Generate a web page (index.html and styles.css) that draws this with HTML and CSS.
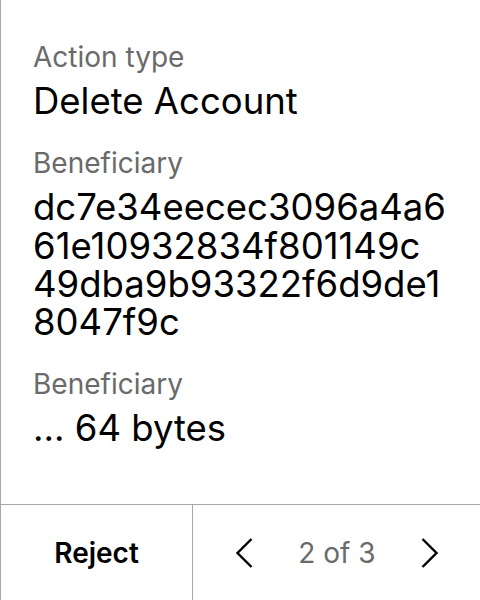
FILE: index.html
```html
<!DOCTYPE html>
<html>
<head>
<meta charset="utf-8">
<link rel="stylesheet" href="styles.css">
</head>
<body>
<div class="screen">
  <main class="content">
    <div class="field">
      <div class="label">Action type</div>
      <div class="value">Delete Account</div>
    </div>
    <div class="field">
      <div class="label">Beneficiary</div>
      <div class="value">dc7e34eecec3096a4a6<br>61e10932834f801149c<br>49dba9b93322f6d9de1<br>8047f9c</div>
    </div>
    <div class="field">
      <div class="label">Beneficiary</div>
      <div class="value">... 64 bytes</div>
    </div>
  </main>
  <footer class="footer">
    <div class="reject">Reject</div>
    <div class="nav">
      <svg class="chev" width="18" height="32" viewBox="0 0 18 32"><path d="M16.5 2 L2.5 16 L16.5 30" fill="none" stroke="#000" stroke-width="2.4"/></svg>
      <span class="page">2 of 3</span>
      <svg class="chev" width="18" height="32" viewBox="0 0 18 32"><path d="M1.5 2 L15.5 16 L1.5 30" fill="none" stroke="#000" stroke-width="2.4"/></svg>
    </div>
  </footer>
</div>
</body>
</html>
```
FILE: styles.css
```css
html, body {
  margin: 0;
  padding: 0;
  background: #fff;
}
body {
  font-family: Inter, "Noto Sans", sans-serif;
  color: #000;
}
.screen {
  width: 480px;
  height: 600px;
  box-sizing: border-box;
  border-left: 1px solid #a8a8a8;
  display: flex;
  flex-direction: column;
}
.content {
  flex: 1;
  padding: 39px 32px 0 32px;
  display: flex;
  flex-direction: column;
  gap: 25px;
}
.label {
  font-size: 28px;
  line-height: 36px;
  color: #6a6a6a;
}
.value {
  font-size: 36.5px;
  line-height: 38.3px;
  margin-top: 7px;
  color: #000;
}
.footer {
  height: 96px;
  box-sizing: border-box;
  flex: none;
  border-top: 1px solid #a8a8a8;
  display: flex;
}
.reject {
  width: 191px;
  border-right: 1px solid #a8a8a8;
  display: flex;
  align-items: center;
  justify-content: center;
  font-size: 28px;
  font-weight: 600;
}
.nav {
  flex: 1;
  display: flex;
  align-items: center;
  justify-content: space-between;
  padding: 0 41px 0 42px;
}
.page {
  font-size: 28px;
  color: #6a6a6a;
}
.chev {
  display: block;
}
```
